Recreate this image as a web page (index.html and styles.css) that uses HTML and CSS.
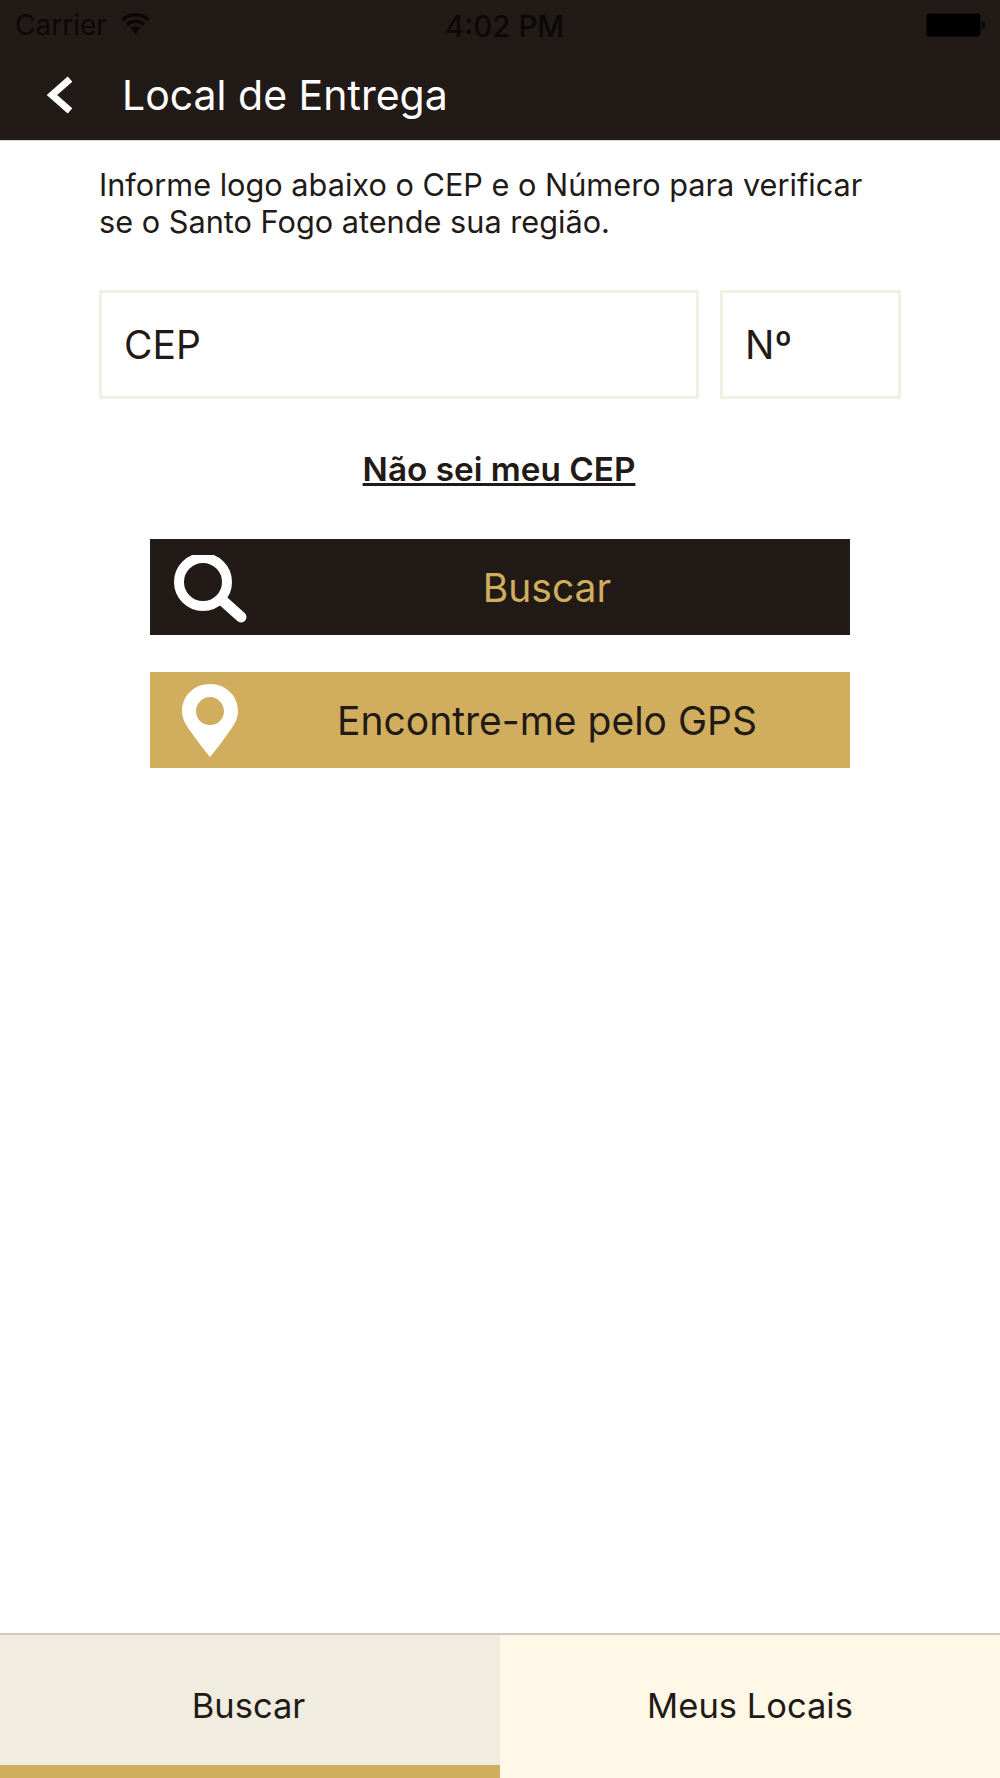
FILE: index.html
```html
<!DOCTYPE html>
<html lang="pt-BR">
<head>
  <meta charset="UTF-8" />
  <meta name="viewport" content="width=device-width, initial-scale=1.0" />
  <title>Local de Entrega</title>
  <link rel="stylesheet" href="styles.css">
</head>
<body>
  <div class="app">
    <header class="top">
      <div class="status-bar">
        <div class="status-left">
          <span>Carrier</span>
          <svg class="wifi" width="29" height="22" viewBox="0 0 29 22" fill="none" stroke="#0b0908" stroke-width="3.500">
            <path d="M1.500 8 C9 1 20 1 27.500 8" />
            <path d="M6 12.500 C11 8 18 8 23 12.500" />
            <path d="M9.500 16 C12.500 13.500 16.500 13.500 19.500 16 L14.500 22 Z" fill="#0b0908" stroke="none" />
          </svg>
        </div>
        <span class="status-time">4:02 PM</span>
        <div class="battery">
          <div class="battery-body"></div>
          <div class="battery-tip"></div>
        </div>
      </div>
      <div class="nav-bar">
        <svg class="back" width="26" height="38" viewBox="0 0 26 38" fill="none" stroke="#fff" stroke-width="7">
          <path d="M24 3 L6 19 L24 35" />
        </svg>
        <h1>Local de Entrega</h1>
      </div>
    </header>

    <main class="content">
      <p class="intro">Informe logo abaixo o CEP e o Número para verificar<br>se o Santo Fogo atende sua região.</p>

      <div class="fields">
        <div class="field field-cep">CEP</div>
        <div class="field field-num">Nº</div>
      </div>

      <a class="help-link" href="#">Não sei meu CEP</a>

      <div class="actions">
        <button class="btn btn-dark">
          <svg class="btn-icon" width="74" height="68" viewBox="0 0 74 68" fill="none" stroke="#fff">
            <circle cx="29" cy="27" r="24" stroke-width="10" />
            <path d="M48 45 L67 62" stroke-width="11" stroke-linecap="round" />
          </svg>
          Buscar
        </button>
        <button class="btn btn-gold">
          <svg class="btn-icon btn-icon-pin" width="58" height="74" viewBox="0 0 58 74">
            <path fill="#fff" fill-rule="evenodd" d="M29 0 C45 0 57 12 57 27 C57 35 53 41 48 48 C42 56 36 65 29 73 C22 65 16 56 10 48 C5 41 1 35 1 27 C1 12 13 0 29 0 Z M29 13 C21 13 15 20 15 27 C15 35 21 41 29 41 C37 41 43 35 43 27 C43 20 37 13 29 13 Z" />
          </svg>
          Encontre-me pelo GPS
        </button>
      </div>
    </main>

    <nav class="tabs">
      <div class="tab tab-active">Buscar</div>
      <div class="tab">Meus Locais</div>
    </nav>
  </div>
</body>
</html>
```

FILE: styles.css
```css
* {
  margin: 0;
  padding: 0;
  box-sizing: border-box;
}

body {
  font-family: Inter, 'Liberation Sans', sans-serif;
  background: #fff;
  color: #221a17;
}

.app {
  display: flex;
  flex-direction: column;
  width: 1000px;
  height: 1778px;
}

.top {
  background: #221a17;
  height: 141px;
  border-bottom: 1px solid #d9d6d2;
}

.status-bar {
  position: relative;
  display: flex;
  justify-content: space-between;
  align-items: center;
  height: 50px;
  padding: 0 15px;
  color: #0b0908;
  font-size: 28px;
}

.status-left {
  display: flex;
  align-items: center;
  gap: 14px;
}

.wifi {
  margin-top: -4px;
}

.status-time {
  position: absolute;
  left: 445px;
  top: 8px;
  font-size: 29.500px;
  font-weight: 500;
}

.battery {
  display: flex;
  align-items: center;
  gap: 1px;
}

.battery-body {
  width: 55px;
  height: 24px;
  background: #000;
  border: 1px solid #0f0c0b;
  border-radius: 4px;
}

.battery-tip {
  width: 3px;
  height: 8px;
  background: #0b0908;
  border-radius: 0 3px 3px 0;
}

.nav-bar {
  display: flex;
  align-items: center;
  height: 89px;
  padding-left: 46px;
  gap: 50px;
  color: #fff;
}

.back {
  flex-shrink: 0;
}

.nav-bar h1 {
  font-size: 41px;
  font-weight: 400;
}

.content {
  flex: 1;
  padding: 25px 99px 0;
}

.intro {
  font-size: 30.700px;
  line-height: 37px;
}

.fields {
  display: flex;
  gap: 21px;
  margin-top: 50px;
  width: 802px;
}

.field {
  height: 109px;
  padding-left: 22px;
  display: flex;
  align-items: center;
  border: 3px solid #f2efe5;
  font-size: 39px;
}

.field-cep {
  width: 600px;
}

.field-num {
  width: 181px;
}

.help-link {
  display: block;
  width: 800px;
  margin-top: 51px;
  text-align: center;
  font-size: 33.300px;
  line-height: 38px;
  font-weight: 600;
  color: #221a17;
}

.actions {
  display: flex;
  flex-direction: column;
  gap: 37px;
  width: 700px;
  margin: 51px 0 0 51px;
}

.btn {
  position: relative;
  height: 96px;
  padding-left: 94px;
  border: 0;
  font-family: inherit;
  font-size: 39px;
}

.btn-dark {
  background: #221a17;
  color: #d0ae5d;
}

.btn-gold {
  background: #d0ae5d;
  color: #221a17;
}

.btn-icon {
  position: absolute;
  left: 24px;
  top: 16px;
}

.btn-icon-pin {
  left: 31px;
  top: 12px;
}

.tabs {
  display: flex;
  height: 145px;
  border-top: 2px solid #cfcabd;
}

.tab {
  width: 500px;
  display: flex;
  align-items: center;
  justify-content: center;
  background: #fff8e6;
  font-size: 34.500px;
  padding-bottom: 2px;
}

.tab-active {
  background: #f0ecdf;
  border-bottom: 13px solid #d0ae5d;
  padding: 11px 3px 0 0;
}
```
